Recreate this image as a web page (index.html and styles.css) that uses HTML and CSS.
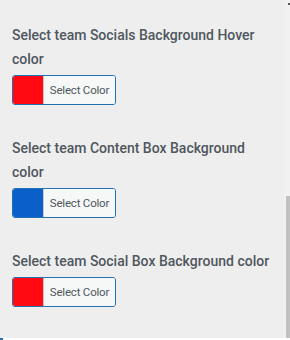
FILE: index.html
```html
<!DOCTYPE html>
<html>
<head>
<meta charset="utf-8">
<link rel="stylesheet" href="styles.css">
</head>
<body>
<div class="panel">
  <div class="content">
    <div class="field">
      <div class="label">Select team Socials Background Hover color</div>
      <button class="color-btn"><span class="swatch red"></span><span class="btn-text">Select Color</span></button>
    </div>
    <div class="field">
      <div class="label">Select team Content Box Background color</div>
      <button class="color-btn"><span class="swatch blue"></span><span class="btn-text">Select Color</span></button>
    </div>
    <div class="field">
      <div class="label">Select team Social Box Background color</div>
      <button class="color-btn"><span class="swatch red"></span><span class="btn-text">Select Color</span></button>
    </div>
  </div>
  <div class="track">
    <div class="arrow"></div>
    <div class="track-space"></div>
    <div class="thumb"></div>
  </div>
</div>
<div class="below"></div>
</body>
</html>
```
FILE: styles.css
```css
html, body {
  margin: 0;
  padding: 0;
  background: #ffffff;
}
body {
  font-family: Roboto, "Liberation Sans", sans-serif;
}
.panel {
  display: flex;
  height: 338px;
  background: #eeeeee;
}
.content {
  flex: 1;
  padding: 23px 8px 0 12px;
  display: flex;
  flex-direction: column;
  gap: 31px;
}
.label {
  font-size: 14px;
  line-height: 24px;
  font-weight: 500;
  color: #50575e;
  margin-bottom: 4px;
}
.color-btn {
  display: flex;
  width: 104px;
  height: 30px;
  padding: 0;
  border: 1px solid #2271b1;
  border-radius: 3px;
  overflow: hidden;
  background: #f6f7f7;
  cursor: pointer;
}
.swatch {
  width: 30px;
  height: 100%;
  flex: none;
}
.red { background: #ff0a12; }
.blue { background: #0a5fc8; }
.btn-text {
  flex: 1;
  height: 100%;
  border-left: 1px solid #d0c4c7;
  background: #f6f7f7;
  color: #50575e;
  font-family: Roboto, "Liberation Sans", sans-serif;
  font-size: 11.5px;
  letter-spacing: -0.2px;
  line-height: 28px;
  text-align: center;
}
.track {
  width: 6px;
  background: #f1f1f1;
  display: flex;
  flex-direction: column;
  align-items: flex-end;
}
.arrow {
  width: 2px;
  height: 2px;
  margin-top: 3px;
  background: #555555;
}
.track-space {
  flex: 1;
}
.thumb {
  width: 4px;
  height: 142px;
  background: #c1c1c1;
}
.below {
  height: 2px;
  width: 3px;
  background: #2271b1;
}
```
